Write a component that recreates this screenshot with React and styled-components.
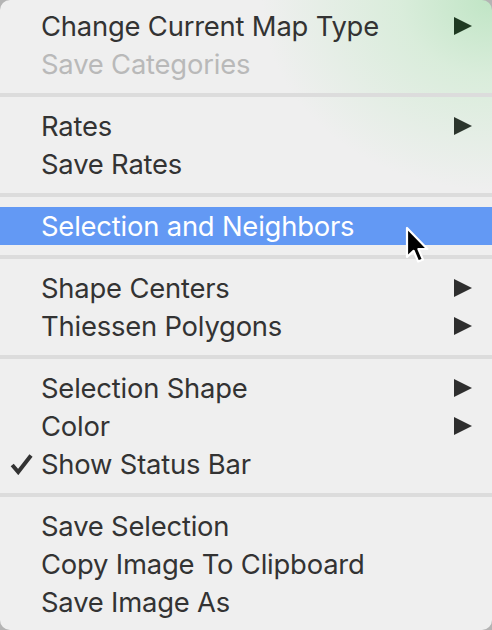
import styled, { createGlobalStyle } from 'styled-components';

const GlobalStyle = createGlobalStyle`
  html, body {
    margin: 0;
    padding: 0;
    background: #b4b4b4;
  }
  #root {
    width: 492px;
    height: 630px;
  }
`;

const Menu = styled.div`
  position: relative;
  box-sizing: border-box;
  width: 492px;
  height: 630px;
  padding: 7px 0 8px;
  border-radius: 10px;
  overflow: hidden;
  background:
    radial-gradient(ellipse 230px 190px at 100% 0%, rgba(192, 229, 197, 1) 0%, rgba(212, 236, 214, 0.8) 40%, rgba(239, 239, 239, 0) 100%),
    #efefef;
  font-family: Inter, 'Liberation Sans', sans-serif;
  display: flex;
  flex-direction: column;
`;

const Item = styled.div`
  height: 38px;
  display: flex;
  align-items: center;
  padding: 0 20px 0 41px;
  position: relative;
  font-size: 27.4px;
  letter-spacing: -0.2px;
  color: ${(p) => (p.$disabled ? '#b9b9b9' : p.$active ? '#ffffff' : '#333333')};
  background: ${(p) => (p.$active ? '#6399f4' : 'transparent')};
`;

const Label = styled.span`
  flex: 1;
`;

const Arrow = styled.svg`
  width: 18px;
  height: 18px;
  fill: ${(p) => p.$tint || '#2e2e2e'};
`;

const Check = styled.svg`
  position: absolute;
  left: 10px;
  top: 8px;
  width: 23px;
  height: 22px;
`;

const Separator = styled.div`
  height: 24px;
  display: flex;
  align-items: center;

  &::after {
    content: '';
    display: block;
    width: 100%;
    height: 4px;
    background: #dcdcdc;
  }
`;

const Cursor = styled.svg`
  position: absolute;
  left: 405px;
  top: 226px;
  width: 26px;
  height: 38px;
`;

const groups = [
  [
    { label: 'Change Current Map Type', sub: true, tint: '#1f3a22' },
    { label: 'Save Categories', disabled: true },
  ],
  [
    { label: 'Rates', sub: true, tint: '#2b352c' },
    { label: 'Save Rates' },
  ],
  [{ label: 'Selection and Neighbors', active: true }],
  [
    { label: 'Shape Centers', sub: true },
    { label: 'Thiessen Polygons', sub: true },
  ],
  [
    { label: 'Selection Shape', sub: true },
    { label: 'Color', sub: true },
    { label: 'Show Status Bar', checked: true },
  ],
  [
    { label: 'Save Selection' },
    { label: 'Copy Image To Clipboard' },
    { label: 'Save Image As' },
  ],
];

const MenuRow = ({ item }) => (
  <Item $disabled={item.disabled} $active={item.active}>
    {item.checked && (
      <Check viewBox="0 0 23 22">
        <path d="M2.2 12 L8.2 19 L21 2.5" fill="none" stroke="#333" strokeWidth="4" strokeLinejoin="miter" />
      </Check>
    )}
    <Label>{item.label}</Label>
    {item.sub && (
      <Arrow viewBox="0 0 18 18" $tint={item.tint}>
        <polygon points="0,0 18,9 0,18" />
      </Arrow>
    )}
  </Item>
);

export default function App() {
  return (
    <>
      <GlobalStyle />
      <Menu>
        {groups.map((group, gi) => (
          <div key={gi}>
            {gi > 0 && <Separator />}
            {group.map((item) => (
              <MenuRow key={item.label} item={item} />
            ))}
          </div>
        ))}
        <Cursor viewBox="0 0 13 19">
          <path
            d="M1 1 L1 15.5 L4.3 12.4 L6.6 17.8 L9 16.8 L6.7 11.5 L11.2 11.5 Z"
            fill="#000"
            stroke="#fff"
            strokeWidth="1.1"
            strokeLinejoin="round"
          />
        </Cursor>
      </Menu>
    </>
  );
}
